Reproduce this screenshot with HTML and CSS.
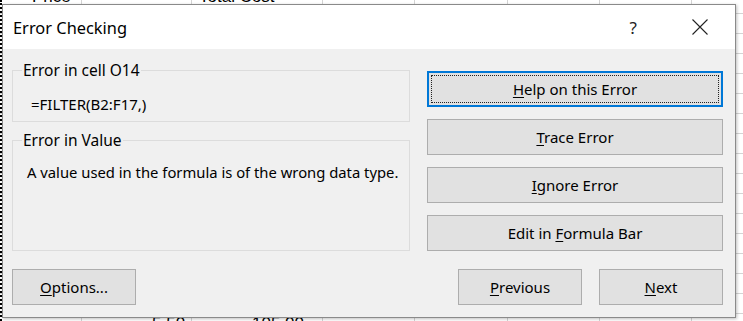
FILE: index.html
```html
<!DOCTYPE html>
<html lang="en">
<head>
    <meta charset="UTF-8">
    <meta name="viewport" content="width=device-width, initial-scale=1.0">
    <title>Error Checking</title>
    <link rel="stylesheet" href="styles.css">
</head>
<body>
    <div class="sheet">
        <span class="cell-text head-price">Price</span>
        <span class="cell-text head-total">Total Cost</span>
        <span class="cell-text foot-a">5.50</span>
        <span class="cell-text foot-b">105.00</span>
    </div>

    <div class="dialog">
        <div class="titlebar">
            <span class="title">Error Checking</span>
            <span class="help">?</span>
            <svg class="close" width="16" height="16" viewBox="0 0 16 16">
                <path d="M0.5 0.5 L15.5 15.5 M15.5 0.5 L0.5 15.5" stroke="#222" stroke-width="1.1" fill="none"/>
            </svg>
        </div>

        <div class="content">
            <div class="left">
                <fieldset class="group group-cell">
                    <legend>Error in cell O14</legend>
                    <div class="formula">=FILTER(B2:F17,)</div>
                </fieldset>
                <fieldset class="group group-value">
                    <legend>Error in Value</legend>
                    <div class="desc">A value used in the formula is of the wrong data type.</div>
                </fieldset>
            </div>
            <div class="right">
                <button class="btn btn-focus"><span class="focus-ring"><u>H</u>elp on this Error</span></button>
                <button class="btn"><u>T</u>race Error</button>
                <button class="btn"><u>I</u>gnore Error</button>
                <button class="btn">Edit in <u>F</u>ormula Bar</button>
            </div>
        </div>

        <div class="footer">
            <button class="btn btn-small"><u>O</u>ptions...</button>
            <div class="nav">
                <button class="btn btn-small"><u>P</u>revious</button>
                <button class="btn btn-small"><u>N</u>ext</button>
            </div>
        </div>
    </div>
</body>
</html>
```

FILE: styles.css
```css
body {
    margin: 0;
    padding: 0;
    width: 743px;
    height: 321px;
    overflow: hidden;
    position: relative;
    background-color: #fff;
    font-family: "Noto Sans", "Open Sans", sans-serif;
}

/* spreadsheet behind the dialog */
.sheet {
    position: absolute;
    inset: 0;
    background-image:
        linear-gradient(#d4d4d4, #d4d4d4),
        linear-gradient(#d4d4d4, #d4d4d4),
        linear-gradient(#d4d4d4, #d4d4d4),
        linear-gradient(#d4d4d4, #d4d4d4),
        linear-gradient(#d4d4d4, #d4d4d4),
        linear-gradient(#d4d4d4, #d4d4d4),
        linear-gradient(#d4d4d4, #d4d4d4),
        linear-gradient(to bottom, #d4d4d4 1px, transparent 1px);
    background-size: 1px 100%, 1px 100%, 1px 100%, 1px 100%, 1px 100%, 1px 100%, 1px 100%, 100% 20px;
    background-position: 79px 0, 189px 0, 320px 0, 412px 0, 505px 0, 597px 0, 689px 0, 0 13px;
    background-repeat: no-repeat, no-repeat, no-repeat, no-repeat, no-repeat, no-repeat, no-repeat, repeat;
    border-left: 2px dotted #000;
}

.cell-text {
    position: absolute;
    font-family: "Liberation Sans", sans-serif;
    font-size: 17px;
    color: #000;
}

.head-price { left: 30px; top: -13px; }
.head-total { left: 197px; top: -13px; }
.foot-a { left: 150px; top: 314px; }
.foot-b { left: 250px; top: 314px; }

.dialog {
    position: absolute;
    left: 2px;
    top: 4px;
    width: 732px;
    height: 312px;
    border: 1px solid #8a8a8a;
    background-color: #f0f0f0;
    box-shadow: 1px 1px 3px rgba(0, 0, 0, 0.25);
    display: flex;
    flex-direction: column;
}

.titlebar {
    height: 44px;
    background-color: #fff;
    display: flex;
    align-items: center;
    padding-left: 10px;
}

.title {
    font-size: 16.4px;
    color: #000;
    flex: 1;
}

.help {
    font-size: 17px;
    color: #222;
    margin-right: 55px;
}

.close {
    margin-right: 27px;
}

.content {
    display: grid;
    grid-template-columns: 398px 296px;
    column-gap: 17px;
    padding: 10px 12px 0 9px;
}

.group {
    margin: 0;
    border: 1px solid #dcdcdc;
    padding: 0 0 0 14px;
    font-size: 15px;
}

.group legend {
    padding: 0 1px;
    margin-left: -5px;
    line-height: 22px;
    font-size: 15.5px;
}

.group-cell {
    height: 61px;
}

.formula {
    padding-top: 13px;
    padding-left: 4px;
}

.group-value {
    margin-top: 7px;
    height: 120px;
}

.desc {
    padding-top: 11px;
    font-size: 14.8px;
}

.right {
    display: flex;
    flex-direction: column;
    gap: 12px;
    padding-top: 12px;
}

.btn {
    height: 36px;
    margin: 0;
    background-color: #e1e1e1;
    border: 1px solid #adadad;
    border-radius: 0;
    font-family: "Noto Sans", "Open Sans", sans-serif;
    font-size: 15px;
    color: #000;
    padding: 0;
}

.btn u {
    text-underline-offset: 2px;
}

.btn-focus {
    border: 2px solid #0078d7;
    padding: 2px;
}

.focus-ring {
    display: flex;
    align-items: center;
    justify-content: center;
    height: 100%;
    border: 1px dotted #222;
    box-sizing: border-box;
}

.footer {
    margin-top: auto;
    display: flex;
    justify-content: space-between;
    padding: 0 12px 12px 9px;
}

.nav {
    display: flex;
    gap: 17px;
}

.btn-small {
    width: 124px;
}
```
